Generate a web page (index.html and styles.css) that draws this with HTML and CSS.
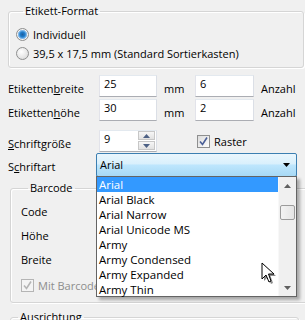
FILE: index.html
```html
<!DOCTYPE html>
<html>
<head>
<meta charset="utf-8">
<link rel="stylesheet" href="styles.css">
</head>
<body>
<div class="dialog">
    <fieldset class="group format">
        <legend>Etikett-Format</legend>
        <label class="radio-row"><span class="radio checked"></span>Individuell</label>
        <label class="radio-row"><span class="radio"></span>39,5 x 17,5 mm (Standard Sortierkasten)</label>
    </fieldset>

    <div class="row">
        <span class="label">Etiketten<u>b</u>reite</span>
        <span class="field">25</span>
        <span class="unit">mm</span>
        <span class="field wide">6</span>
        <span class="unit">Anzahl</span>
    </div>
    <div class="row">
        <span class="label">Etiketten<u>h</u>öhe</span>
        <span class="field">30</span>
        <span class="unit">mm</span>
        <span class="field wide">2</span>
        <span class="unit">Anzahl</span>
    </div>
    <div class="row size-row">
        <span class="label"><u>S</u>chriftgröße</span>
        <span class="field spin">9
            <span class="spin-btns">
                <span class="spin-btn"><svg width="7" height="4" viewBox="0 0 7 4"><path d="M0 4 L3.5 0 L7 4 Z" fill="#4d6185"/></svg></span>
                <span class="spin-btn"><svg width="7" height="4" viewBox="0 0 7 4"><path d="M0 0 L3.5 4 L7 0 Z" fill="#4d6185"/></svg></span>
            </span>
        </span>
        <label class="check-row"><span class="check checked"><svg width="9" height="9" viewBox="0 0 9 9"><path d="M1 4.5 L3.5 7.5 L8 0.5" fill="none" stroke="#4a5f97" stroke-width="1.6"/></svg></span>Raster</label>
    </div>
    <div class="row font-row">
        <span class="label">S<u>c</u>hriftart</span>
        <div class="combo-wrap">
            <div class="combo">Arial
                <svg class="combo-arrow" width="7" height="4" viewBox="0 0 7 4"><path d="M0 0 L7 0 L3.5 4 Z" fill="#000"/></svg>
            </div>
            <div class="dropdown">
                <ul class="items">
                    <li class="selected">Arial</li>
                    <li>Arial Black</li>
                    <li>Arial Narrow</li>
                    <li>Arial Unicode MS</li>
                    <li>Army</li>
                    <li>Army Condensed</li>
                    <li>Army Expanded</li>
                    <li>Army Thin</li>
                </ul>
                <div class="scrollbar">
                    <span class="sb-arrow"><svg width="7" height="4" viewBox="0 0 7 4"><path d="M0 4 L3.5 0 L7 4 Z" fill="#606060"/></svg></span>
                    <span class="sb-track"><span class="sb-thumb"></span></span>
                    <span class="sb-arrow"><svg width="7" height="4" viewBox="0 0 7 4"><path d="M0 0 L3.5 4 L7 0 Z" fill="#606060"/></svg></span>
                </div>
            </div>
            <svg class="cursor" width="18" height="26" viewBox="0 0 18 26">
                <path d="M1 1 L1 17 L5 13 L8 20 L10 19 L7.5 12 L13 12 Z" fill="#000" opacity="0.45" transform="translate(2 2)"/>
                <path d="M1 1 L1 17 L5 13 L8 20 L10 19 L7.5 12 L13 12 Z" fill="#fff" stroke="#000" stroke-width="1"/>
            </svg>
        </div>
    </div>

    <fieldset class="group barcode">
        <legend>Barcode</legend>
        <div class="bc-row">Code</div>
        <div class="bc-row">Höhe</div>
        <div class="bc-row">Breite</div>
        <label class="check-row disabled"><span class="check checked"><svg width="9" height="9" viewBox="0 0 9 9"><path d="M1 4.5 L3.5 7.5 L8 0.5" fill="none" stroke="#b5b5b5" stroke-width="1.6"/></svg></span>Mit Barcode</label>
    </fieldset>

    <fieldset class="group align">
        <legend>Ausrichtung</legend>
    </fieldset>
</div>
</body>
</html>
```

FILE: styles.css
```css
html, body {
    margin: 0;
    padding: 0;
    width: 100%;
    height: 100%;
    overflow: hidden;
}
body {
    background: #f0f0f0;
    font-family: "Open Sans", "Noto Sans", sans-serif;
    font-size: 11px;
    color: #000;
}
.dialog {
    padding: 3px 8px 0 8px;
}
.group {
    margin: 0;
    padding: 0;
    border: 1px solid #d5d5d5;
    border-radius: 3px;
    box-shadow: inset 1px 1px 0 #fff, 1px 1px 0 #fff;
}
.group legend {
    padding: 0 2px;
    margin-left: 7px;
    line-height: 16px;
}
.format {
    width: 287px;
    height: 63px;
    padding: 0 0 0 7px;
}
.radio-row {
    display: flex;
    align-items: center;
    height: 19px;
    gap: 4px;
}
.radio-row:first-of-type {
    margin-top: 6px;
}
.radio {
    width: 11px;
    height: 11px;
    border-radius: 50%;
    border: 1px solid #8e8f8f;
    background: radial-gradient(circle at 40% 35%, #fff, #d4d4d4);
    box-sizing: content-box;
}
.radio.checked {
    background: radial-gradient(circle at 50% 50%, #1e5d9c 0, #1f7fcf 2.5px, #9dc8ef 4.5px, #f4f4f4 5px, #dcdcdc 6px);
}
.row {
    display: flex;
    align-items: center;
    height: 22px;
    margin-top: 2px;
}
.format + .row {
    margin-top: 7px;
}
.label {
    width: 91px;
    padding-top: 4px;
}
.field {
    box-sizing: border-box;
    width: 58px;
    height: 22px;
    border: 1px solid #abadb3;
    border-top-color: #e3e9ef;
    border-left-color: #e2e3ea;
    border-right-color: #dbdfe6;
    background: #fff;
    padding: 0 0 0 4px;
    line-height: 16px;
}
.field.wide {
    width: 59px;
}
.unit {
    margin-left: 7px;
    width: 31px;
    padding-top: 4px;
}
.size-row {
    margin-top: 9px;
    height: 22px;
}
.spin {
    display: flex;
    justify-content: space-between;
    padding-right: 1px;
}
.spin-btns {
    display: flex;
    flex-direction: column;
    gap: 1px;
}
.spin-btn {
    width: 17px;
    height: 9px;
    display: flex;
    align-items: center;
    justify-content: center;
    border: 1px solid #c7c7c7;
    box-sizing: border-box;
    background: linear-gradient(#f6f6f6, #e2e2e2);
}
.check-row {
    display: flex;
    align-items: center;
    gap: 4px;
    margin-left: 40px;
}
.check {
    width: 11px;
    height: 11px;
    border: 1px solid #8e8f8f;
    background: linear-gradient(135deg, #dcdcdc, #fdfdfd);
    display: flex;
    align-items: center;
    justify-content: center;
}
.font-row {
    margin-top: 1px;
    height: 24px;
}
.font-row .label {
    padding-top: 2px;
}
.combo-wrap {
    position: relative;
}
.combo {
    box-sizing: border-box;
    width: 201px;
    height: 24px;
    margin-left: -1px;
    border: 1px solid #3c7fb1;
    border-radius: 2px;
    background: linear-gradient(#eaf6fd 0, #d9f0fc 45%, #bee6fd 50%, #a7d9f5 100%);
    padding: 2px 0 0 3px;
    line-height: 18px;
    position: relative;
}
.combo-arrow {
    position: absolute;
    right: 6px;
    top: 9px;
}
.dropdown {
    position: absolute;
    left: -1px;
    top: 23px;
    width: 201px;
    height: 121px;
    box-sizing: border-box;
    background: #fff;
    border: 1px solid #646464;
    display: flex;
    box-shadow: 3px 3px 3px rgba(0, 0, 0, 0.3);
}
.items {
    list-style: none;
    margin: 0;
    padding: 0;
    flex: 1;
    font-size: 11.5px;
}
.items li {
    height: 15px;
    line-height: 15px;
    padding-left: 2px;
}
.items li.selected {
    background: #3399ff;
    color: #fff;
}
.scrollbar {
    width: 17px;
    display: flex;
    flex-direction: column;
    background: #f0f0f0;
    border-left: 1px solid #f8f8f8;
}
.sb-arrow {
    height: 17px;
    display: flex;
    align-items: center;
    justify-content: center;
}
.sb-track {
    flex: 1;
    padding: 11px 1px 0 1px;
}
.sb-thumb {
    display: block;
    height: 13px;
    border: 1px solid #9b9b9b;
    border-radius: 2px;
    background: linear-gradient(90deg, #f3f3f3, #e4e4e4);
}
.cursor {
    position: absolute;
    left: 164px;
    top: 109px;
}
.barcode {
    margin: 3px 0 0 2px;
    width: 287px;
    height: 121px;
    padding: 0 0 0 10px;
}
.bc-row {
    height: 24px;
    line-height: 24px;
}
.bc-row:first-of-type {
    margin-top: 4px;
}
.barcode .check-row {
    margin: 1px 0 0 0;
    height: 24px;
    color: #8d8d8d;
}
.barcode .check {
    border-color: #b5b5b5;
    background: #f4f4f4;
}
.align {
    margin: 6px 0 0 2px;
    width: 287px;
    height: 4px;
}
```
